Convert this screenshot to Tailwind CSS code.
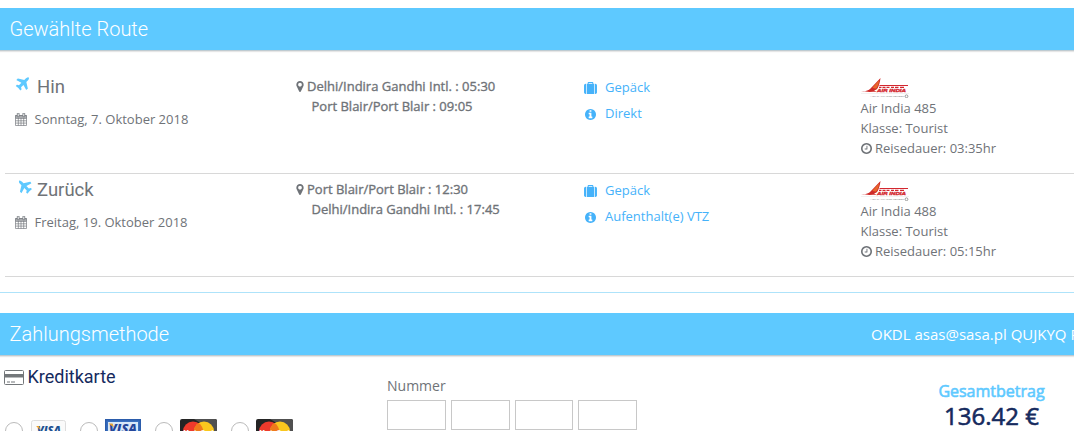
<!DOCTYPE html>
<html lang="de">
<head>
  <meta charset="UTF-8" />
  <meta name="viewport" content="width=device-width, initial-scale=1.0" />
  <title>Buchung</title>
  <script src="https://cdn.jsdelivr.net/npm/@tailwindcss/browser@4"></script>
</head>
<body class="h-[431px] w-[1074px] overflow-hidden bg-white pt-2 font-['Open_Sans',sans-serif] text-[13px] leading-5 text-[#6f7378]">
  <!-- shared icons -->
  <svg class="hidden">
    <symbol id="plane" viewBox="150 100 1500 1500"><path d="M1568 160q44 52 12 148t-108 172l-161 161 160 696q5 19-12 33l-128 96q-7 6-19 6-4 0-7-1-15-3-21-16l-279-508-259 259 53 194q5 17-8 31l-96 96q-9 9-23 9h-2q-15-2-24-13l-189-252-252-189q-11-7-13-23-1-13 9-25l96-97q9-9 23-9 6 0 8 1l194 53 259-259-508-279q-14-8-17-24-2-16 9-27l128-128q14-13 30-8l665 159 160-160q76-76 172-108t148 12z"/></symbol>
    <symbol id="marker" viewBox="384 128 1024 1536"><path d="M1152 640q0-106-75-181t-181-75-181 75-75 181 75 181 181 75 181-75 75-181zm256 0q0 109-33 179l-364 774q-16 33-47.5 52t-67.5 19-67.500-19-46.500-52l-365-774q-33-70-33-179 0-212 150-362t362-150 362 150 150 362z"/></symbol>
    <symbol id="suitcase" viewBox="0 0 1792 1664"><path d="M640 256h512v-128h-512v128zm-352 0v1408h-64q-92 0-158-66t-66-158v-960q0-92 66-158t158-66h64zm1120 0v1408h-1024v-1408h128v-160q0-40 28-68t68-28h576q40 0 68 28t28 68v160h128zm384 224v960q0 92-66 158t-158 66h-64v-1408h64q92 0 158 66t66 158z"/></symbol>
    <symbol id="info" viewBox="128 128 1536 1536"><path d="M1152 1376v-160q0-14-9-23t-23-9h-96v-512q0-14-9-23t-23-9h-320q-14 0-23 9t-9 23v160q0 14 9 23t23 9h96v320h-96q-14 0-23 9t-9 23v160q0 14 9 23t23 9h448q14 0 23-9t9-23zm-128-896v-160q0-14-9-23t-23-9h-192q-14 0-23 9t-9 23v160q0 14 9 23t23 9h192q14 0 23-9t9-23zm640 416q0 209-103 385.500t-279.500 279.500-385.500 103-385.500-103-279.500-279.500-103-385.500 103-385.500 279.500-279.500 385.500-103 385.500 103 279.500 279.500 103 385.500z"/></symbol>
    <symbol id="clock" viewBox="128 128 1536 1536"><path d="M1024 544v448q0 14-9 23t-23 9h-320q-14 0-23-9t-9-23v-64q0-14 9-23t23-9h224v-352q0-14 9-23t23-9h64q14 0 23 9t9 23zm416 352q0-148-73-273t-198-198-273-73-273 73-198 198-73 273 73 273 198 198 273 73 273-73 198-198 73-273zm224 0q0 209-103 385.500t-279.500 279.500-385.500 103-385.500-103-279.500-279.500-103-385.500 103-385.500 279.500-279.500 385.500-103 385.500 103 279.500 279.500 103 385.500z"/></symbol>
    <symbol id="calendar" viewBox="0 0 12 13">
      <path d="M.5 2.500h11v10H.5z M.5 5.500h11 M.5 7.800h11 M.5 10.100h11 M3.300 5v7.500 M6 5v7.500 M8.700 5v7.500" fill="none" stroke="currentColor" stroke-width=".65"/>
      <path d="M.3 2h11.400v3H.3z" opacity=".6"/>
      <path d="M2.300.2h1.800v3.500H2.300z M7.900.2h1.800v3.500H7.900z" fill="#fff" stroke="currentColor" stroke-width=".8"/>
    </symbol>
    <symbol id="airindia" viewBox="0 0 48 20">
      <path d="M0 13.300c5 .2 7.500-.8 9.500-2.800L19.500 0c-.5 4-1.300 7-2.300 9-1 2.300-2.200 3.300-4.200 3.300l2.500 1.500C10.500 13.800 6 14.200 0 13.300z" fill="#cf2a28"/>
      <path d="M11.500 9.500 18.300 2c-.7 4-1.500 6.300-2.800 8.200-1.400.4-2.900.2-4-.7z" fill="#e8662a"/>
      <path d="M18.500 7.500h28.500M18 9.300h2.500m1 0h3m1 0h3m1.500 0h3m1 0h3.500m1.500 0h4" stroke="#d3272f" stroke-width="1.200" fill="none"/>
      <text x="16" y="14" font-family="Liberation Sans" font-size="4" font-weight="bold" font-style="italic" textLength="29" lengthAdjust="spacingAndGlyphs" fill="#d3272f" stroke="#d3272f" stroke-width=".3">AIR INDIA</text>
      <path d="M0 15.500h48" stroke="#ddd" stroke-width=".4"/>
      <text x="9" y="19.300" font-family="Liberation Sans" font-size="2.200" textLength="34" lengthAdjust="spacingAndGlyphs" fill="#888">A STAR ALLIANCE MEMBER</text>
      <circle cx="45.500" cy="18.300" r="1.400" fill="none" stroke="#777" stroke-width=".7"/>
    </symbol>
    <symbol id="mastercard" viewBox="0 0 37 24">
      <rect width="37" height="24" rx="2" fill="#242424"/>
      <path d="M14 0h21a2 2 0 0 1 2 2v12z" fill="#505050"/>
      <circle cx="13" cy="12.500" r="10" fill="#ee3a2c"/>
      <circle cx="24" cy="12.500" r="10" fill="#fac71e"/>
      <path d="M18.500 4a10 10 0 0 1 0 17 10 10 0 0 1 0-17z" fill="#ef7a1c"/>
      <text x="3" y="15.500" font-family="Liberation Sans" font-size="6.500" font-weight="bold" font-style="italic" textLength="30" fill="#fff">MasterCard</text>
    </symbol>
  </svg>

  <header class="h-[43px] border-b border-[#bfcbd1] bg-[#5ec9ff] pl-[9.5px] font-[Roboto] text-[20px] leading-[42px] font-light text-white shadow-[0_1px_1px_#e6e6e6]">Gewählte Route</header>

  <main class="ml-[5px]">
    <section class="grid h-[123px] grid-cols-[291px_288px_277px_1fr] border-b border-[#d8d8d8]">
      <div class="pt-6 pl-[9.5px]">
        <div class="flex h-6 font-[Roboto] text-[18.5px] leading-6">
          <svg class="mt-0.5 mr-[7.5px] h-[14px] w-[15px] fill-[#5ec9ff]"><use href="#plane"/></svg>Hin
        </div>
        <div class="mt-[10px] flex items-center"><svg class="mr-2 h-[13px] w-3 fill-current"><use href="#calendar"/></svg>Sonntag, 7. Oktober 2018</div>
      </div>
      <div class="pt-[25px] [-webkit-text-stroke:0.35px]">
        <div class="flex items-center"><svg class="mr-[3px] h-[11px] w-2 fill-current"><use href="#marker"/></svg><span>Delhi/Indira Gandhi Intl. : 05:30</span></div>
        <div class="pl-[15.5px]">Port Blair/Port Blair : 09:05</div>
      </div>
      <div class="pt-[26px] text-[#45b2fa]">
        <div class="flex items-center"><svg class="mt-0.5 mr-2 h-3 w-[13px] fill-current"><use href="#suitcase"/></svg>Gepäck</div>
        <div class="mt-1.5 flex items-center"><svg class="mt-0.5 mr-[9px] ml-px h-[11px] w-[11px] fill-current"><use href="#info"/></svg>Direkt</div>
      </div>
      <div class="pt-[27px]">
        <svg class="h-5 w-12"><use href="#airindia"/></svg>
        <div class="-ml-[0.5px]">Air India 485</div>
        <div class="-ml-[0.5px]">Klasse: Tourist</div>
        <div class="-ml-[0.5px] flex items-center"><svg class="mr-[3.5px] h-[11px] w-[11px] fill-current"><use href="#clock"/></svg>Reisedauer: 03:35hr</div>
      </div>
    </section>

    <section class="grid h-[103px] grid-cols-[291px_288px_277px_1fr] border-b border-[#d8d8d8]">
      <div class="pt-1 pl-[9.5px]">
        <div class="flex h-6 font-[Roboto] text-[18.5px] leading-6">
          <svg class="mt-0.5 mr-[4.5px] ml-[3px] h-[14px] w-[15px] -rotate-90 fill-[#5ec9ff]"><use href="#plane"/></svg>Zurück
        </div>
        <div class="mt-[10px] flex items-center"><svg class="mr-2 h-[13px] w-3 fill-current"><use href="#calendar"/></svg>Freitag, 19. Oktober 2018</div>
      </div>
      <div class="pt-[5px] [-webkit-text-stroke:0.35px]">
        <div class="flex items-center"><svg class="mr-[3px] h-[11px] w-2 fill-current"><use href="#marker"/></svg><span>Port Blair/Port Blair : 12:30</span></div>
        <div class="pl-[15.5px]">Delhi/Indira Gandhi Intl. : 17:45</div>
      </div>
      <div class="pt-1.5 text-[#45b2fa]">
        <div class="flex items-center"><svg class="mt-0.5 mr-2 h-3 w-[13px] fill-current"><use href="#suitcase"/></svg>Gepäck</div>
        <div class="mt-1.5 flex items-center"><svg class="mt-0.5 mr-[9px] ml-px h-[11px] w-[11px] fill-current"><use href="#info"/></svg>Aufenthalt(e) VTZ</div>
      </div>
      <div class="pt-[7px]">
        <svg class="h-5 w-12"><use href="#airindia"/></svg>
        <div class="-ml-[0.5px]">Air India 488</div>
        <div class="-ml-[0.5px]">Klasse: Tourist</div>
        <div class="-ml-[0.5px] flex items-center"><svg class="mr-[3.5px] h-[11px] w-[11px] fill-current"><use href="#clock"/></svg>Reisedauer: 05:15hr</div>
      </div>
    </section>
  </main>

  <hr class="mt-[15px] mb-5 border-[#aee3fa]" />

  <header class="flex h-[43px] border-b border-[#bfcbd1] bg-[#5ec9ff] pl-[9.5px] leading-[42px] text-white shadow-[0_1px_1px_#e6e6e6]">
    <span class="w-[861.5px] shrink-0 font-[Roboto] text-[20px] font-light">Zahlungsmethode</span>
    <span class="text-[15px] whitespace-nowrap">OKDL asas@sasa.pl QUJKYQ POL</span>
  </header>

  <section class="grid grid-cols-[387px_522px_1fr]">
    <div class="pt-[9px] pl-1">
      <div class="flex items-center font-[Roboto] text-[18px] leading-6 text-[#152a5e]">
        <svg class="mr-[3.5px] h-[15px] w-5" viewBox="0 0 20 15"><rect x=".5" y=".5" width="19" height="14" rx="1" fill="#fff" stroke="#73777a"/><path d="M1 4h18v3.500H1zM3 11.500h3v1H3zM7 11.500h4v1H7z" fill="#73777a"/></svg>Kreditkarte
      </div>
      <div class="mt-[29px] grid grid-cols-[75px_75px_76px_75px]">
        <div class="flex">
          <span class="mt-1 mr-2 ml-px h-[18px] w-[18px] rounded-full border border-[#bbb]"></span>
          <svg class="mt-0.5 h-6 w-[35px]" viewBox="0 0 35 24"><rect x=".5" y=".5" width="34" height="23" rx="2" fill="#fafafa" stroke="#ddd"/><text x="6" y="14" font-family="Open Sans" font-size="11" font-weight="800" font-style="italic" textLength="24" lengthAdjust="spacingAndGlyphs" fill="#1d5192">VISA</text><path d="m5 6 3 0 1.500 4z" fill="#eda42c"/></svg>
        </div>
        <div class="flex">
          <span class="mt-1 mr-[7px] ml-px h-[18px] w-[18px] rounded-full border border-[#bbb]"></span>
          <svg class="mt-px h-6 w-9" viewBox="0 0 36 24"><rect x=".75" y=".75" width="34.500" height="22.500" fill="#3a70c0" stroke="#2b5cab" stroke-width="1.500"/><rect x="3" y="3" width="30" height="18" fill="#d8e8f8"/><text x="4" y="14" font-family="Open Sans" font-size="13" font-weight="800" font-style="italic" textLength="28" lengthAdjust="spacingAndGlyphs" fill="#25469a">VISA</text><path d="m3.500 4.500 4 0 1.500 4z" fill="#eda42c"/></svg>
        </div>
        <div class="flex">
          <span class="mt-1 mr-[7px] ml-px h-[18px] w-[18px] rounded-full border border-[#bbb]"></span>
          <svg class="mt-px h-6 w-[37px]"><use href="#mastercard"/></svg>
        </div>
        <div class="flex">
          <span class="mt-1 mr-[7px] ml-px h-[18px] w-[18px] rounded-full border border-[#bbb]"></span>
          <svg class="mt-px h-6 w-[37px]"><use href="#mastercard"/></svg>
        </div>
      </div>
    </div>
    <div class="pt-5">
      <div class="text-[14px]">Nummer</div>
      <div class="mt-1 flex gap-[5px]">
        <input class="h-[30px] w-[59px] border border-[#c8c8c8]" />
        <input class="h-[30px] w-[59px] border border-[#c8c8c8]" />
        <input class="h-[30px] w-[58px] border border-[#c8c8c8]" />
        <input class="h-[30px] w-[59px] border border-[#c8c8c8]" />
      </div>
    </div>
    <div class="pt-[23px] text-center">
      <div class="text-[16px] leading-6 text-[#5ec9ff] [-webkit-text-stroke:0.6px]">Gesamtbetrag</div>
      <div class="text-[24px] leading-[26px] text-[#152a5e] [-webkit-text-stroke:0.6px]">136.42 €</div>
    </div>
  </section>
</body>
</html>
